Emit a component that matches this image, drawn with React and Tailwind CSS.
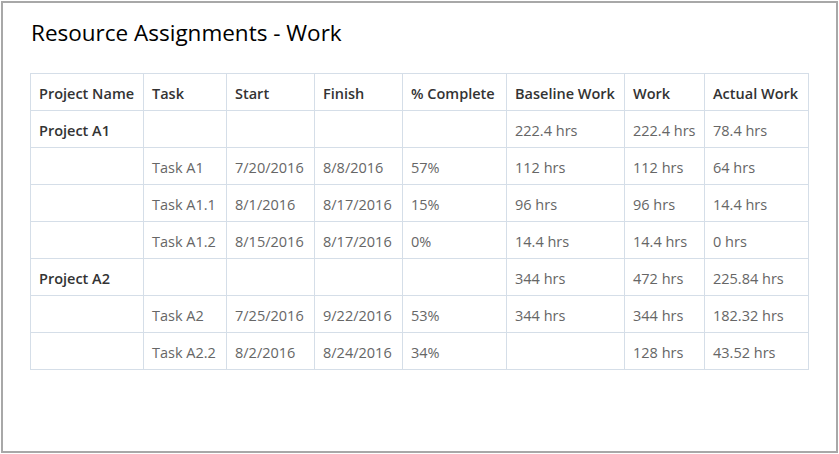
const COLS = [
  { key: 'project', label: 'Project Name', w: 'w-[113px]' },
  { key: 'task', label: 'Task', w: 'w-[83px]' },
  { key: 'start', label: 'Start', w: 'w-[88px]' },
  { key: 'finish', label: 'Finish', w: 'w-[88px]' },
  { key: 'pct', label: '% Complete', w: 'w-[104px]' },
  { key: 'baseline', label: 'Baseline Work', w: 'w-[118px]' },
  { key: 'work', label: 'Work', w: 'w-[80px]' },
  { key: 'actual', label: 'Actual Work', w: 'w-[104px]' },
];

const ROWS = [
  { project: 'Project A1', baseline: '222.4 hrs', work: '222.4 hrs', actual: '78.4 hrs' },
  { task: 'Task A1', start: '7/20/2016', finish: '8/8/2016', pct: '57%', baseline: '112 hrs', work: '112 hrs', actual: '64 hrs' },
  { task: 'Task A1.1', start: '8/1/2016', finish: '8/17/2016', pct: '15%', baseline: '96 hrs', work: '96 hrs', actual: '14.4 hrs' },
  { task: 'Task A1.2', start: '8/15/2016', finish: '8/17/2016', pct: '0%', baseline: '14.4 hrs', work: '14.4 hrs', actual: '0 hrs' },
  { project: 'Project A2', baseline: '344 hrs', work: '472 hrs', actual: '225.84 hrs' },
  { task: 'Task A2', start: '7/25/2016', finish: '9/22/2016', pct: '53%', baseline: '344 hrs', work: '344 hrs', actual: '182.32 hrs' },
  { task: 'Task A2.2', start: '8/2/2016', finish: '8/24/2016', pct: '34%', work: '128 hrs', actual: '43.52 hrs' },
];

export default function App() {
  return (
    <div className="w-[839px] h-[454px] bg-white p-px" style={{ fontFamily: '"Open Sans", "Noto Sans", sans-serif' }}>
      <div className="w-[837px] h-[452px] border-2 border-[#a8a8a8] bg-white">
        <h1 className="pl-[28px] pt-[14px] h-[70px] text-[22.5px] leading-[32px] text-black">Resource Assignments - Work</h1>

        <table className="ml-[27px] border-collapse table-fixed text-[14.5px]">
          <thead>
            <tr>
              {COLS.map(c => (
                <th key={c.key} className={`${c.w} h-[37px] border border-[#d5dee8] px-2 pt-[4px] pb-0 text-left font-semibold text-[#333]`}>
                  {c.label}
                </th>
              ))}
            </tr>
          </thead>
          <tbody>
            {ROWS.map((r, i) => (
              <tr key={i}>
                {COLS.map(c => (
                  <td
                    key={c.key}
                    className={`h-[37px] border border-[#d5dee8] px-2 pt-[4px] pb-0 ${c.key === 'project' ? 'font-semibold text-[#333]' : 'text-[#666]'}`}
                  >
                    {r[c.key] || ''}
                  </td>
                ))}
              </tr>
            ))}
          </tbody>
        </table>
      </div>
    </div>
  );
}
